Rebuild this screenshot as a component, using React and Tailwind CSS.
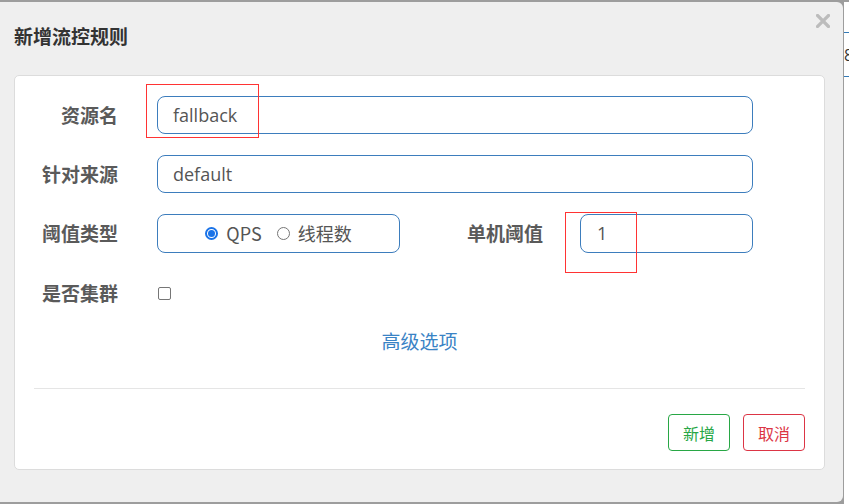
import React from 'react';

const cjk = '"Noto Sans CJK SC", "Open Sans", sans-serif';

function Radio({ checked, label }) {
   return (
      <label className="flex items-center gap-[8px]">
         {checked ? (
            <span className="w-[13px] h-[13px] rounded-full border-[2px] border-[#1a73e8] flex items-center justify-center">
               <span className="w-[7px] h-[7px] rounded-full bg-[#1a73e8]"></span>
            </span>
         ) : (
            <span className="w-[13px] h-[13px] rounded-full border border-[#767676]"></span>
         )}
         <span>{label}</span>
      </label>
   );
}

function Label({ children, className = '' }) {
   return (
      <div className={`text-right font-bold text-[19px] text-[#5a5a5a] ${className}`}>{children}</div>
   );
}

export default function App() {
   return (
      <div className="relative w-[849px] h-[504px] bg-[#9d9d9d] pt-[2px] flex overflow-hidden" style={{ fontFamily: cjk }}>
         <div className="w-[843px] h-[500px] bg-[#efefef] rounded-r-[6px] flex flex-col shrink-0">
            <div className="h-[73px] flex items-start justify-between pl-[14px] pr-[13px]">
               <h4 className="mt-[21px] text-[19px] font-bold text-[#333] leading-[26px]">新增流控规则</h4>
               <svg className="mt-[12px]" width="14" height="14" viewBox="0 0 14 14">
                  <path d="M1.5 1.5 L12.5 12.5 M12.5 1.5 L1.5 12.5" stroke="#bcbcbc" strokeWidth="3.2" strokeLinecap="square" />
               </svg>
            </div>
            <div className="ml-[14px] w-[811px] h-[395px] bg-white border border-[#dcdcdc] rounded-[5px] flex flex-col pt-[20px]">
               <div className="flex items-center h-[38px] mb-[21px]">
                  <Label className="w-[103px]">资源名</Label>
                  <div className="ml-[39px] w-[596px] h-[38px] border border-[#3d7dbd] rounded-[8px] flex items-center px-[15px] text-[18px] text-[#555]" style={{ fontFamily: '"Open Sans", "Noto Sans CJK SC", sans-serif' }}>fallback</div>
               </div>
               <div className="flex items-center h-[38px] mb-[21px]">
                  <Label className="w-[103px]">针对来源</Label>
                  <div className="ml-[39px] w-[596px] h-[38px] border border-[#3d7dbd] rounded-[8px] flex items-center px-[15px] text-[18px] text-[#555]" style={{ fontFamily: '"Open Sans", "Noto Sans CJK SC", sans-serif' }}>default</div>
               </div>
               <div className="flex items-center h-[39px] mb-[21px]">
                  <Label className="w-[103px]">阈值类型</Label>
                  <div className="ml-[39px] w-[243px] h-[39px] border border-[#3d7dbd] rounded-[8px] flex items-center justify-center gap-[15px] text-[18px] text-[#555]">
                     <Radio checked label="QPS" />
                     <Radio label="线程数" />
                  </div>
                  <Label className="w-[143px]">单机阈值</Label>
                  <div className="ml-[37px] w-[173px] h-[39px] border border-[#3d7dbd] rounded-[8px] flex items-center px-[16px] text-[18px] text-[#555]" style={{ fontFamily: '"Open Sans", "Noto Sans CJK SC", sans-serif' }}>1</div>
               </div>
               <div className="flex items-center h-[38px]">
                  <Label className="w-[103px]">是否集群</Label>
                  <span className="ml-[40px] w-[13px] h-[13px] rounded-[2px] border border-[#767676]"></span>
               </div>
               <div className="mt-[15px] text-center text-[19px] text-[#3a83c5] leading-[28px]">高级选项</div>
               <div className="mt-[33px] mx-[19px] border-t border-[#e5e5e5]"></div>
               <div className="mt-[25px] mr-[19px] flex justify-end gap-[13px]">
                  <button className="w-[62px] h-[37px] border border-[#28a745] rounded-[4px] text-[16px] text-[#28a745]">新增</button>
                  <button className="w-[62px] h-[37px] border border-[#dc3545] rounded-[4px] text-[16px] text-[#dc3545]">取消</button>
               </div>
            </div>
         </div>
         <div className="flex-1 ml-[1px] bg-white flex flex-col overflow-hidden">
            <div className="h-[30px]"></div>
            <div className="border-t border-[#337ab7]"></div>
            <div className="h-[43px] flex items-center text-[16px] text-[#333] whitespace-nowrap" style={{ fontFamily: '"Open Sans", sans-serif' }}>8</div>
            <div className="border-t border-[#337ab7]"></div>
         </div>
         <div className="absolute left-[146px] top-[84px] w-[113px] h-[54px] border border-[#ff3333]"></div>
         <div className="absolute left-[565px] top-[212px] w-[72px] h-[61px] border border-[#ff3333]"></div>
      </div>
   );
}
